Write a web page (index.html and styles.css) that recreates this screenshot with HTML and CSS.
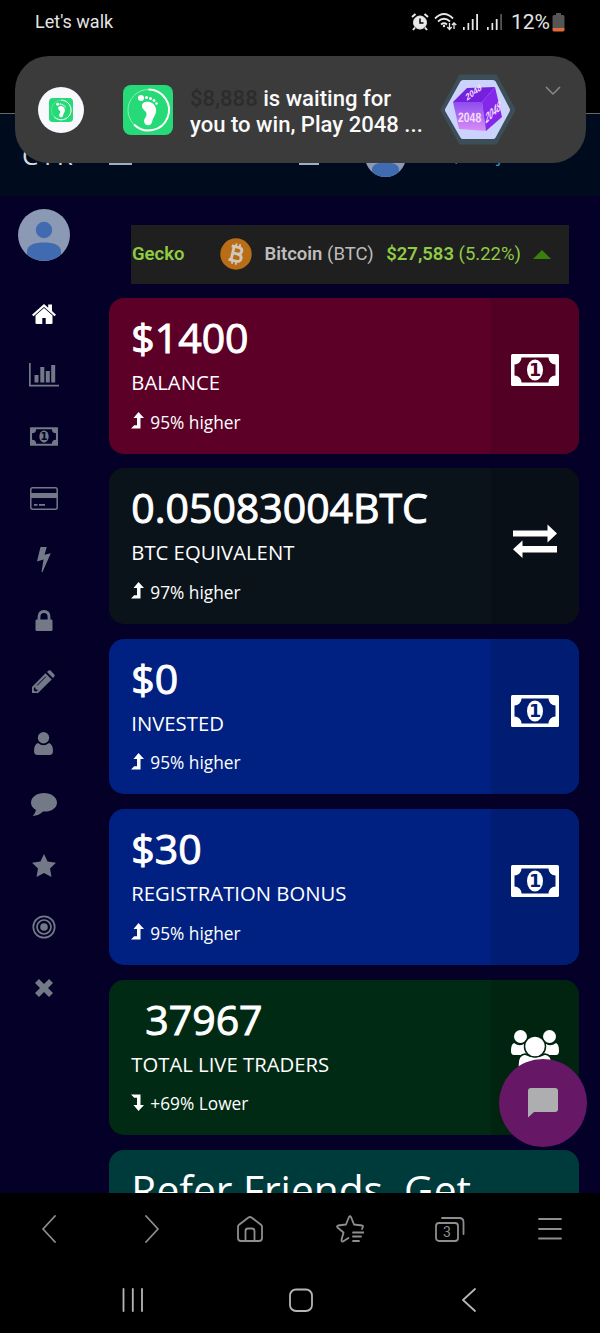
FILE: index.html
```
<!DOCTYPE html>
<html lang="en">
<head>
  <meta charset="UTF-8">
  <meta name="viewport" content="width=device-width, initial-scale=1.0">
  <title>Dashboard</title>
  <link rel="stylesheet" href="styles.css">
</head>
<body>
  <svg class="sprite" xmlns="http://www.w3.org/2000/svg">
    <symbol id="money" viewBox="0 0 48 32">
      <rect width="48" height="32" rx="1.5" fill="currentColor"/>
      <path class="hole" d="M10.5 3.5H37.500A7 7 0 0 0 44.5 10.500V21.500A7 7 0 0 0 37.500 28.5H10.5A7 7 0 0 0 3.5 21.500V10.500A7 7 0 0 0 10.5 3.5Z"/>
      <ellipse cx="24" cy="16" rx="8" ry="10.5" fill="currentColor"/>
      <text class="hole bill" x="24" y="22.300" text-anchor="middle">1</text>
    </symbol>
    <symbol id="person" viewBox="0 0 52 52">
      <circle cx="26" cy="26" r="26" fill="#8c99b4"/>
      <circle cx="26" cy="21" r="8.2" fill="#406bb0"/>
      <path d="M9 44V42C9 36 17 33.5 26 33.5S43 36 43 42V45.5A26 26 0 0 1 9 45.5Z" fill="#406bb0"/>
    </symbol>
    <symbol id="up" viewBox="0 0 13 17">
      <path d="M7.5 0L13 6H9.5V16.5H0L3.2 13.3H6V6H2.5Z" fill="currentColor"/>
    </symbol>
    <symbol id="down" viewBox="0 0 13 17">
      <path d="M7.5 17L13 11H9.5V.5H0L3.2 3.7H6V11H2.5Z" fill="currentColor"/>
    </symbol>
    <symbol id="steps" viewBox="0 0 50 50">
      <rect width="50" height="50" rx="8" fill="#27da78"/>
      <circle cx="25.500" cy="25" r="20.500" fill="none" stroke="#8ceeb6" stroke-width="1"/>
      <path d="M25.500 4.500A20.500 20.500 0 1 1 11 39.500" fill="none" stroke="#fff" stroke-width="2"/>
      <path d="M20 18C24 15 32 17 33 24C34 29 30 32 29 37C28 42 21 41 21 36C21 33 25 31 23 27C21 25 17 22 20 18Z" fill="#fff"/>
      <circle cx="18" cy="13" r="3" fill="#fff"/>
      <circle cx="23.500" cy="12.500" r="1.600" fill="#fff"/>
      <circle cx="27.500" cy="13.500" r="1.500" fill="#fff"/>
      <circle cx="31" cy="15.500" r="1.400" fill="#fff"/>
      <circle cx="33.500" cy="18.500" r="1.300" fill="#fff"/>
    </symbol>
  </svg>

  <div class="phone">
    <div class="status">
      <span>Let's walk</span>
      <div class="status-icons">
        <svg width="18" height="18" viewBox="0 0 18 18" fill="none" stroke="#e8e8e8">
          <circle cx="9" cy="9.500" r="6.500" fill="#e8e8e8"/>
          <path d="M1 4L4.500 1M17 4L13.500 1M4 14.500L2 17M14 14.500L16 17" stroke-width="2"/>
          <path d="M9 5.500V10H12.500" stroke="#000" stroke-width="1.500"/>
        </svg>
        <svg width="23" height="18" viewBox="0 0 23 18" fill="none" stroke="#e8e8e8" stroke-width="1.800">
          <path d="M1 5.500Q10 -3.500 19 5.500M4 8.500Q10 3 16 8.500M7 11.500Q10 9 13 11.500"/>
          <circle cx="10" cy="13" r="1.200" fill="#e8e8e8" stroke="none"/>
          <path d="M15.500 10V16M13.300 14L15.500 16.500L17.700 14M20 16V10.500M18 12L20 10L22.300 12" stroke-width="1.300"/>
        </svg>
        <svg width="17" height="18" viewBox="0 0 17 18" fill="#e8e8e8">
          <path d="M1 14H2.700V17H1ZM5.500 10H7.200V17H5.500ZM9.800 6H11.600V17H9.800ZM14.200 1H16V17H14.200Z"/>
        </svg>
        <svg class="sim" width="17" height="18" viewBox="0 0 17 18" fill="#e8e8e8">
          <path d="M1 14H2.700V17H1ZM5.500 10H7.200V17H5.500ZM9.800 6H11.600V17H9.800Z"/>
          <path d="M14.200 1H16V17H14.200Z" fill="#555"/>
        </svg>
        <span class="percent">12%</span>
        <svg width="13" height="19" viewBox="0 0 13 19">
          <path d="M4 0H9V2H11Q12.500 2 12.500 4V15H.5V4Q.5 2 2 2H4Z" fill="#555"/>
          <path d="M.5 15H12.500V16.500Q12.500 18.500 11 18.500H2Q.5 18.500 .5 16.500Z" fill="#e36a3c"/>
        </svg>
      </div>
    </div>

    <header class="navbar">
      <span class="brand">CTR</span>
      <span class="toggle"></span>
      <span class="toggle mail"></span>
      <svg class="nav-avatar"><use href="#person"/></svg>
      <span class="hello">Hi, Benj</span>
    </header>

    <div class="page">
      <nav class="sidebar">
        <svg class="avatar"><use href="#person"/></svg>
        <a class="active"><svg width="24" height="21" viewBox="0 0 24 21" fill="currentColor"><path d="M12 0L16.200 3.800V.5H20V7L24 10.700L22.500 12.300L12 3L1.500 12.300L0 10.700Z"/><path d="M12 4L20.500 11.500V19Q20.500 20 19.500 20H13.700V14H10.300V20H4.500Q3.500 20 3.500 19V11.500Z"/></svg></a>
        <a><svg width="30" height="24" viewBox="0 0 30 24" fill="currentColor"><path d="M0 0H1.700V21.800H30V23.500H0ZM5.500 12H9.500V19.500H5.500ZM11.300 4H15.300V19.500H11.300ZM16.800 8H20.800V19.500H16.800ZM22.200 2H26.200V19.500H22.200Z"/></svg></a>
        <a><svg width="28" height="19"><use href="#money"/></svg></a>
        <a><svg width="28" height="23" viewBox="0 0 28 23"><rect x=".8" y=".8" width="26.400" height="21.400" rx="1.800" fill="none" stroke="currentColor" stroke-width="1.500"/><path d="M1 6H27V11H1ZM4 17H7.500V18.800H4ZM9 17H15V18.800H9Z" fill="currentColor"/></svg></a>
        <a><svg width="14" height="25" viewBox="0 0 14 25" fill="currentColor"><path d="M3.500 0H9.800L7.500 7.800L13.800 6.200L5.500 25H4.500L6.500 12.500L0 14.500Z"/></svg></a>
        <a><svg width="18" height="21" viewBox="0 0 18 21"><path d="M4 10V7Q4 1.500 9 1.500T14 7V10" fill="none" stroke="currentColor" stroke-width="2.800"/><rect x=".5" y="9.500" width="17" height="11.500" rx="1.200" fill="currentColor"/></svg></a>
        <a><svg width="23" height="23" viewBox="0 0 23 23"><path d="M0 23V17L13.500 3.300L19.700 9.500L6 23Z M15 2L16.500 .6Q17.500 -.2 18.500 .6L22.300 4.500Q23.200 5.500 22.300 6.500L21 8Z" fill="currentColor"/><path class="hole" d="M2 17.500L3.500 17.500V19.500H5.500V21L3 21.500L1.700 20Z"/><path class="cut" d="M5 15.500L13.800 6.700"/></svg></a>
        <a><svg width="19" height="23" viewBox="0 0 19 23" fill="currentColor"><circle cx="9.500" cy="5.800" r="5.700"/><path d="M4 11Q9.500 15.500 15 11Q19 12.500 19 19Q19 23 15.500 23H3.500Q0 23 0 19Q0 12.500 4 11Z"/></svg></a>
        <a><svg width="26" height="23" viewBox="0 0 26 23" fill="currentColor"><path d="M13 0C20 0 26 4.200 26 9.700S20 19 12 18.500Q8 22.500 1.700 23Q4.500 20 5 17Q0 14 0 9.700C0 4.200 6 0 13 0Z"/></svg></a>
        <a><svg width="24" height="23" viewBox="0 0 24 23" fill="currentColor"><path d="M12 0L15.600 7.600L24 8.800L18 14.600L19.500 23L12 19L4.500 23L6 14.600L0 8.800L8.400 7.600Z"/></svg></a>
        <a><svg width="24" height="24" viewBox="0 0 24 24" fill="none" stroke="currentColor" stroke-width="1.700"><circle cx="12" cy="12" r="10.700"/><circle cx="12" cy="12" r="7"/><circle cx="12" cy="12" r="3.800" fill="currentColor" stroke="none"/></svg></a>
        <a><svg width="18" height="18" viewBox="0 0 18 18"><path d="M4 0L9 5L14 0L18 4L13 9L18 14L14 18L9 13L4 18L0 14L5 9L0 4Z" fill="currentColor"/></svg></a>
      </nav>

      <main class="content">
        <div class="ticker">
          <b class="green">Gecko</b>
          <svg class="coin" width="32" height="32" viewBox="0 0 32 32">
            <circle cx="16" cy="16" r="15.700" fill="#b96d16"/>
            <g transform="rotate(13 16 16)" fill="none" stroke="#d0c8bd">
              <path d="M12.500 8.500V23.500M10 9H17Q21 9 21 12.300T17 15.700H12.500M17 15.700Q22 15.700 22 19.500T17 23H10" stroke-width="2.800"/>
              <path d="M14.200 5.500V9M18 5.500V9M14.200 23V26.500M18 23V26.500" stroke-width="1.800"/>
            </g>
          </svg>
          <span class="name"><b>Bitcoin</b> (BTC)</span>
          <span class="green"><b>$27,583</b> (5.22%)</span>
          <span class="caret"></span>
        </div>

        <section class="card red">
          <div class="info"><h2>$1400</h2><h3>BALANCE</h3><p><svg><use href="#up"/></svg>95% higher</p></div>
          <div class="side"><svg width="48" height="32"><use href="#money"/></svg></div>
        </section>
        <section class="card dark">
          <div class="info"><h2>0.05083004BTC</h2><h3>BTC EQUIVALENT</h3><p><svg><use href="#up"/></svg>97% higher</p></div>
          <div class="side"><svg width="44" height="34" viewBox="0 0 44 34" fill="currentColor"><path d="M0 6.500H34.500V.5L44 9.500L34.500 18.500V12.500H0ZM44 22V28.500H9.500V34L0 25.200L9.500 16.500V22Z"/></svg></div>
        </section>
        <section class="card blue">
          <div class="info"><h2>$0</h2><h3>INVESTED</h3><p><svg><use href="#up"/></svg>95% higher</p></div>
          <div class="side"><svg width="48" height="32"><use href="#money"/></svg></div>
        </section>
        <section class="card blue">
          <div class="info"><h2>$30</h2><h3>REGISTRATION BONUS</h3><p><svg><use href="#up"/></svg>95% higher</p></div>
          <div class="side"><svg width="48" height="32"><use href="#money"/></svg></div>
        </section>
        <section class="card green-bg">
          <div class="info"><h2 class="indent">37967</h2><h3>TOTAL LIVE TRADERS</h3><p><svg><use href="#down"/></svg>+69% Lower</p></div>
          <div class="side">
            <svg class="users" width="48" height="44" viewBox="0 0 48 44">
              <g fill="currentColor">
                <circle cx="9.500" cy="6.500" r="6.500"/><circle cx="38.500" cy="6.500" r="6.500"/>
                <path d="M3 13Q8 17 13 14L18 25H3Q0 25 0 21Q0 14 3 13ZM45 13Q40 17 35 14L30 25H45Q48 25 48 21Q48 14 45 13Z"/>
              </g>
              <g class="outlined">
                <path d="M14 24Q24 29 34 24Q41 25 41 34V44H7V34Q7 25 14 24Z"/>
                <circle cx="24" cy="16.500" r="10.500"/>
              </g>
            </svg>
          </div>
        </section>
        <section class="card teal">
          <div class="info"><h2 class="light">Refer Friends, Get</h2></div>
        </section>
      </main>
    </div>

    <footer class="bottom">
      <div class="browser-bar">
        <a class="back"><svg width="14" height="28" viewBox="0 0 14 28"><path d="M13 1L1 14L13 27"/></svg></a>
        <a class="forward"><svg width="14" height="28" viewBox="0 0 14 28"><path d="M1 1L13 14L1 27"/></svg></a>
        <a><svg width="26" height="26" viewBox="0 0 26 26"><path d="M1 10.500Q1 9.500 2 8.700L11.500 1.500Q13 .5 14.500 1.500L24 8.700Q25 9.500 25 10.500V22Q25 25 22 25H4Q1 25 1 22ZM8.500 25V15Q8.500 12.500 11 12.500H15Q17.500 12.500 17.500 15V25"/></svg></a>
        <a><svg width="28" height="28" viewBox="0 0 28 28"><path d="M26 14L27 11.500Q27 10.500 26 10.500L18 9.500L15 2Q14 .5 13 2L10 9.500L2 10.500Q.5 11 1.500 12.500L7.500 17.500L5.500 25Q5.500 27 7 26.500L12.500 23M17 17.500H28M17 21.500H25M17 26H23"/></svg></a>
        <a><svg width="30" height="26" viewBox="0 0 30 26"><rect x="1" y="7" width="22" height="18" rx="3"/><path d="M7 2H24Q28.500 2 28.500 6V18"/><text x="12" y="21" text-anchor="middle">3</text></svg></a>
        <a><svg width="24" height="24" viewBox="0 0 24 24"><path d="M1 2H23M1 12H23M1 21.500H23"/></svg></a>
      </div>
      <div class="system-bar">
        <a><svg width="22" height="24" viewBox="0 0 22 24"><path d="M1.500 1V23M10.800 1V23M20 1V23"/></svg></a>
        <a><svg width="24" height="24" viewBox="0 0 24 24"><rect x="1" y="1.500" width="22" height="21.500" rx="6"/></svg></a>
        <a><svg width="14" height="24" viewBox="0 0 14 24"><path d="M13 1L1 12L13 23"/></svg></a>
      </div>
    </footer>

    <button class="chat" aria-label="Chat">
      <svg width="30" height="30" viewBox="0 0 30 30" fill="#aeaeb0"><path d="M3 0H27Q30 0 30 3V21Q30 24 27 24H6L0 29.500V3Q0 0 3 0Z"/></svg>
    </button>

    <aside class="notification">
      <div class="app-dot"><svg width="24" height="24"><use href="#steps"/></svg></div>
      <svg class="app-icon" width="50" height="50"><use href="#steps"/></svg>
      <div class="message"><span>$8,888</span> is waiting for<br>you to win, Play 2048 ...</div>
      <svg class="game" width="80" height="72" viewBox="0 0 80 72">
        <defs>
          <linearGradient id="front" x1="0" y1="0" x2="0" y2="1"><stop offset="0" stop-color="#8d4df0"/><stop offset="1" stop-color="#d98cf5"/></linearGradient>
        </defs>
        <path d="M23 3H57L75 36L57 68H23L5 36Z" fill="#3c4f58" stroke="#3c4f58" stroke-width="5" stroke-linejoin="round"/>
        <path d="M25 9H55L69 36L55 62H25L10 36Z" fill="#cbd3fc" stroke="#cbd3fc" stroke-width="6" stroke-linejoin="round"/>
        <path d="M15 28L29 14L57 13L44 28Z" fill="#7420dd"/>
        <path d="M15 28L44 28L48 57L21 55Z" fill="url(#front)"/>
        <path d="M44 28L57 13L64 43L48 57Z" fill="#8427ea"/>
        <g class="cube-text">
          <text transform="translate(20 48) skewY(1) scale(.95 1.25)" font-size="11">2048</text>
          <text transform="translate(47.500 50) skewY(-43) scale(.62 1.350)" font-size="11">2048</text>
          <text transform="translate(29 27) rotate(-38) skewX(-20)" font-size="8.500">2048</text>
        </g>
      </svg>
      <svg class="chevron" width="16" height="10" viewBox="0 0 16 10"><path d="M1 1L8 8L15 1" fill="none" stroke="#8a8a8a" stroke-width="1.500"/></svg>
    </aside>
  </div>
</body>
</html>
```
FILE: styles.css
```
* {
  box-sizing: border-box;
}

body {
  margin: 0;
  background: #000;
  color: #fff;
  font-family: 'Open Sans', sans-serif;
}

svg {
  display: block;
  flex: none;
}

.sprite {
  display: none;
}

.phone {
  position: relative;
  width: 600px;
  height: 1333px;
  overflow: hidden;
  display: flex;
  flex-direction: column;
  --hole: #040027;
}

.hole {
  fill: var(--hole);
}

.cut {
  stroke: var(--hole);
  stroke-width: 1;
}

.bill {
  font: bold 17.500px 'DejaVu Sans', sans-serif;
}

/* status bar */
.status {
  height: 114px;
  flex: none;
  padding: 11px 35px 0;
  display: flex;
  justify-content: space-between;
  align-items: flex-start;
  border-bottom: 1px solid #666;
  font: 18px/22px Roboto, sans-serif;
  color: #e4e4e4;
}

.status-icons {
  display: flex;
  align-items: center;
  gap: 5px;
}

.status-icons .sim {
  margin-left: 2px;
}

.percent {
  font-size: 21px;
  margin: 0 -3px 0 3px;
}

/* top navbar */
.navbar {
  height: 82px;
  flex: none;
  display: flex;
  align-items: flex-start;
  padding: 25px 0 0 22px;
  background: #000c1d;
}

.brand {
  width: 87px;
  font: 26px/32px 'Open Sans', sans-serif;
  letter-spacing: 2px;
  color: #d5dbe3;
}

.toggle {
  width: 23px;
  height: 2px;
  margin-top: 24px;
  background: #9fb0c0;
}

.toggle.mail {
  margin-left: 167px;
  width: 20px;
}

.nav-avatar {
  width: 41px;
  height: 41px;
  margin: -3px 0 0 46px;
}

.hello {
  margin-left: 31px;
  font-size: 18px;
  line-height: 32px;
  color: #3293c9;
}

/* page */
.page {
  height: 997px;
  flex: none;
  display: flex;
  background: #040027;
  overflow: hidden;
}

.sidebar {
  width: 87px;
  flex: none;
  padding-top: 13px;
  display: flex;
  flex-direction: column;
  align-items: center;
  color: #737987;
}

.avatar {
  width: 52px;
  height: 52px;
  margin-bottom: 22.500px;
}

.sidebar a {
  height: 61.3px;
  flex: none;
  display: flex;
  align-items: center;
}

.sidebar .active {
  color: #fff;
}

.content {
  width: 470px;
  flex: none;
  margin-left: 22.300px;
  padding-top: 29px;
}

.ticker {
  width: 438px;
  height: 59px;
  margin: 0 0 14px 21.700px;
  padding: 0 0 1px 1px;
  display: flex;
  align-items: center;
  background: #1f1f1f;
  font: 18.500px/24px Roboto, sans-serif;
  color: #bcbcbc;
  white-space: nowrap;
}

.ticker b {
  font-weight: 600;
}

.green {
  color: #90cb45;
}

.coin {
  margin: 0 12px 0 36px;
}

.name {
  margin-right: 12.500px;
}

.caret {
  margin-left: 12px;
  border: 9px solid transparent;
  border-top: 0;
  border-bottom: 9px solid #397f0b;
}

.card {
  height: 155.600px;
  margin-bottom: 14.800px;
  border-radius: 15px;
  overflow: hidden;
  display: flex;
  justify-content: space-between;
  background: var(--bg);
}

.red { --bg: #5d0028; --hole: #520023; }
.dark { --bg: #0b131a; --hole: #090f16; }
.blue { --bg: #002182; --hole: #001c73; }
.green-bg { --bg: #012a14; --hole: #012411; }
.teal { --bg: #003b3b; --hole: #003b3b; }

.info {
  padding-left: 22px;
  white-space: nowrap;
}

.info h2 {
  margin: 11px 0 0;
  font-size: 41px;
  line-height: 56px;
  font-weight: 400;
  -webkit-text-stroke: 1px #fff;
}

.info .indent {
  margin-left: 14px;
}

.info .light {
  font-size: 40.700px;
  -webkit-text-stroke: 0;
}

.info h3 {
  margin: 3px 0 0;
  font-size: 20.300px;
  line-height: 28px;
  font-weight: 400;
}

.info p {
  display: flex;
  align-items: center;
  margin: 13.500px 0 0;
  font-size: 17.300px;
  line-height: 25px;
}

.info p svg {
  width: 13px;
  height: 17px;
  margin: -3px 6px 0 0;
}

.side {
  width: 88px;
  display: flex;
  align-items: center;
  justify-content: center;
  padding-bottom: 11px;
  background: var(--hole);
}

.users {
  margin-top: 1px;
}

.outlined {
  fill: currentColor;
  stroke: var(--hole);
  stroke-width: 1.500;
}

/* bottom bars */
.bottom {
  height: 140px;
  flex: none;
  background: #000;
}

.bottom a {
  display: flex;
  justify-content: center;
  align-items: center;
}

.bottom svg {
  fill: none;
  stroke: #8e8e8e;
  stroke-width: 1.800;
  stroke-linecap: round;
  stroke-linejoin: round;
}

.bottom text {
  fill: #8e8e8e;
  stroke: none;
  font: 14px Roboto, sans-serif;
}

.browser-bar {
  height: 71px;
  display: grid;
  grid-template-columns: repeat(6, 100px);
}

.browser-bar .back {
  padding-right: 3px;
}

.browser-bar .forward {
  padding-left: 4px;
}

.system-bar {
  height: 71px;
  display: grid;
  grid-template-columns: repeat(3, 168px);
  justify-content: center;
  padding-left: 2px;
}

.bottom .system-bar svg {
  stroke: #b5b5b5;
}

/* chat button */
.chat {
  position: absolute;
  left: 499px;
  top: 1059px;
  width: 88px;
  height: 88px;
  padding: 0;
  border: none;
  border-radius: 50%;
  background: #661766;
  display: flex;
  align-items: center;
  justify-content: center;
}

/* notification */
.notification {
  position: absolute;
  left: 15px;
  top: 56px;
  width: 571px;
  height: 107px;
  padding-left: 23px;
  display: flex;
  align-items: center;
  background: #3b3b3b;
  border-radius: 34px;
}

.app-dot {
  width: 46px;
  height: 46px;
  border-radius: 50%;
  background: #f7f9fc;
  display: flex;
  align-items: center;
  justify-content: center;
}

.app-icon {
  margin: 0 17px 0 39px;
}

.message {
  width: 248px;
  padding-top: 2px;
  font: 500 22.100px/26px Roboto, sans-serif;
  color: #fafafa;
  white-space: nowrap;
}

.message span {
  color: #2c2c2c;
}

.cube-text {
  fill: #f3dcff;
  font-family: 'Liberation Sans', sans-serif;
  font-weight: bold;
}

.chevron {
  margin: -37px 0 0 27px;
}
```
